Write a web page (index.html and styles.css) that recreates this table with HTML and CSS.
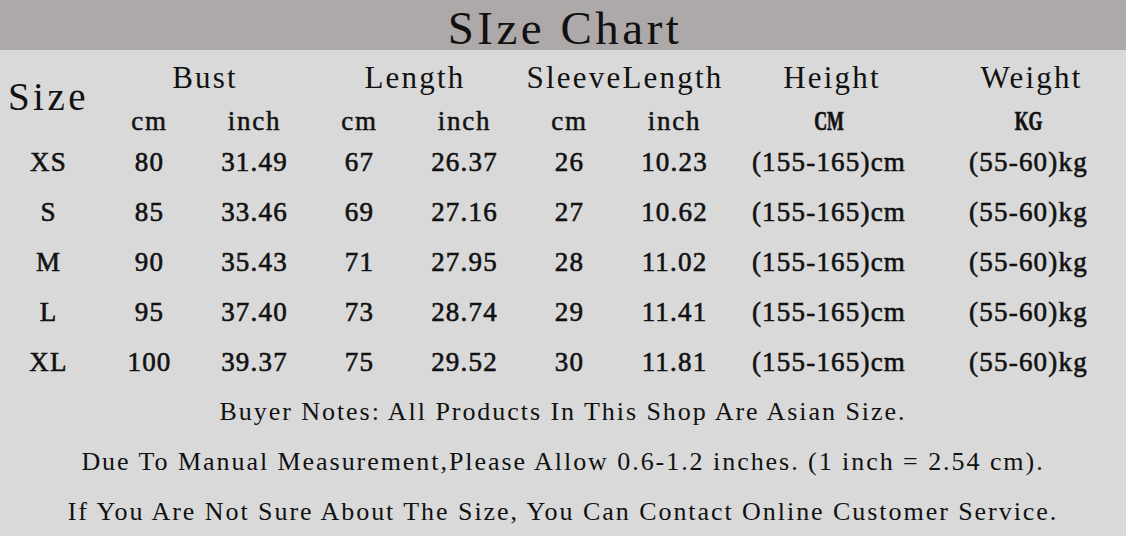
FILE: index.html
```html
<!DOCTYPE html>
<html>
<head>
<meta charset="utf-8">
<link rel="stylesheet" href="styles.css">
</head>
<body>
<div class="chart">
  <div class="banner"><h1 class="title">SIze Chart</h1></div>
  <div class="table">
    <div class="cell size-head">Size</div>
    <div class="cell group span2">Bust</div>
    <div class="cell group span2">Length</div>
    <div class="cell group span2">SleeveLength</div>
    <div class="cell group">Height</div>
    <div class="cell group">Weight</div>

    <div class="cell sub">cm</div><div class="cell sub">inch</div>
    <div class="cell sub">cm</div><div class="cell sub">inch</div>
    <div class="cell sub">cm</div><div class="cell sub">inch</div>
    <div class="cell sub caps">CM</div><div class="cell sub caps">KG</div>

    <div class="cell val">XS</div><div class="cell val">80</div><div class="cell val">31.49</div><div class="cell val">67</div><div class="cell val">26.37</div><div class="cell val">26</div><div class="cell val">10.23</div><div class="cell val">(155-165)cm</div><div class="cell val">(55-60)kg</div>
    <div class="cell val">S</div><div class="cell val">85</div><div class="cell val">33.46</div><div class="cell val">69</div><div class="cell val">27.16</div><div class="cell val">27</div><div class="cell val">10.62</div><div class="cell val">(155-165)cm</div><div class="cell val">(55-60)kg</div>
    <div class="cell val">M</div><div class="cell val">90</div><div class="cell val">35.43</div><div class="cell val">71</div><div class="cell val">27.95</div><div class="cell val">28</div><div class="cell val">11.02</div><div class="cell val">(155-165)cm</div><div class="cell val">(55-60)kg</div>
    <div class="cell val">L</div><div class="cell val">95</div><div class="cell val">37.40</div><div class="cell val">73</div><div class="cell val">28.74</div><div class="cell val">29</div><div class="cell val">11.41</div><div class="cell val">(155-165)cm</div><div class="cell val">(55-60)kg</div>
    <div class="cell val">XL</div><div class="cell val">100</div><div class="cell val">39.37</div><div class="cell val">75</div><div class="cell val">29.52</div><div class="cell val">30</div><div class="cell val">11.81</div><div class="cell val">(155-165)cm</div><div class="cell val">(55-60)kg</div>
  </div>
  <div class="notes">
    <p class="note">Buyer Notes: All Products In This Shop Are Asian Size.</p>
    <p class="note">Due To Manual Measurement,Please Allow 0.6-1.2 inches. (1 inch = 2.54 cm).</p>
    <p class="note">If You Are Not Sure About The Size, You Can Contact Online Customer Service.</p>
  </div>
</div>
</body>
</html>
```

FILE: styles.css
```css
html, body {
  margin: 0;
  padding: 0;
}
body {
  width: 1126px;
  height: 536px;
  overflow: hidden;
  background: #d9d9d9;
  color: #111;
  font-family: "Liberation Serif", "Times New Roman", serif;
}
.chart {
  display: flex;
  flex-direction: column;
}
.banner {
  height: 50px;
  background: #ada9a8;
  display: flex;
  justify-content: center;
  align-items: flex-end;
}
.title {
  margin: 0;
  padding-left: 4px;
  font-weight: 400;
  font-size: 47px;
  line-height: 50px;
  letter-spacing: 3.5px;
  transform: translateY(3px);
}
.table {
  display: grid;
  grid-template-columns: 97px repeat(6, 105px) 204px 1fr;
  grid-template-rows: 55px 32px repeat(5, 50px);
}
.cell {
  display: flex;
  align-items: center;
  justify-content: center;
  white-space: nowrap;
}
.size-head {
  grid-row: span 2;
  font-size: 39px;
  letter-spacing: 3.5px;
  padding-top: 6px;
}
.group {
  font-size: 31px;
  letter-spacing: 2.2px;
  padding-left: 6px;
}
.span2 {
  grid-column: span 2;
}
.sub {
  font-size: 27px;
  letter-spacing: 1.8px;
  -webkit-text-stroke: 0.5px #111;
}
.caps {
  font-weight: 700;
  -webkit-text-stroke: 0.7px #111;
  letter-spacing: 0;
  font-size: 27px;
  transform: scaleX(0.66);
}
.val {
  font-size: 27px;
  letter-spacing: 1.2px;
  -webkit-text-stroke: 0.6px #111;
}
.notes {
  display: flex;
  flex-direction: column;
  align-items: center;
}
.note {
  margin: 0;
  height: 50px;
  line-height: 50px;
  font-size: 26px;
  letter-spacing: 1.95px;
  white-space: nowrap;
}
```
